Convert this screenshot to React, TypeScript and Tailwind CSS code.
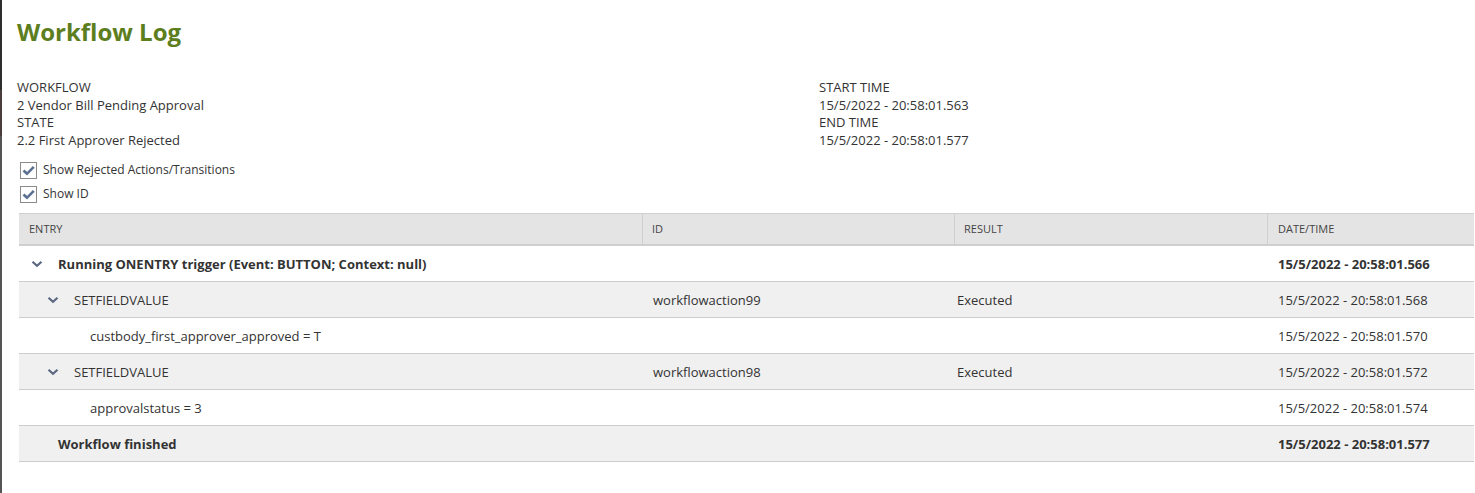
import React from "react";

const Chevron = () => (
  <svg width="12" height="8" viewBox="0 0 12 8" className="shrink-0">
    <path d="M1.5 1.8 L6 5.8 L10.5 1.8" fill="none" stroke="#5b6780" strokeWidth="2.2" />
  </svg>
);

const Check = () => (
  <span className="flex h-[17px] w-[17px] items-center justify-center border border-[#8a8a8a] bg-white">
    <svg width="13" height="11" viewBox="0 0 13 11">
      <path d="M1.5 5.5 L5 8.8 L11.8 1.8" fill="none" stroke="#5a7091" strokeWidth="2.6" />
    </svg>
  </span>
);

type Row = {
  level: number;
  chevron: boolean;
  entry: string;
  id?: string;
  result?: string;
  date: string;
  bold?: boolean;
  gray?: boolean;
};

const rows: Row[] = [
  { level: 0, chevron: true, entry: "Running ONENTRY trigger (Event: BUTTON; Context: null)", date: "15/5/2022 - 20:58:01.566", bold: true },
  { level: 1, chevron: true, entry: "SETFIELDVALUE", id: "workflowaction99", result: "Executed", date: "15/5/2022 - 20:58:01.568", gray: true },
  { level: 2, chevron: false, entry: "custbody_first_approver_approved = T", date: "15/5/2022 - 20:58:01.570" },
  { level: 1, chevron: true, entry: "SETFIELDVALUE", id: "workflowaction98", result: "Executed", date: "15/5/2022 - 20:58:01.572", gray: true },
  { level: 2, chevron: false, entry: "approvalstatus = 3", date: "15/5/2022 - 20:58:01.574" },
  { level: 0, chevron: false, entry: "Workflow finished", date: "15/5/2022 - 20:58:01.577", bold: true, gray: true },
];

const padFor = (level: number, chevron: boolean) => {
  if (level === 0) return chevron ? "pl-[12px]" : "pl-[39px]";
  if (level === 1) return "pl-[28px]";
  return "pl-[71px]";
};

export default function App() {
  return (
    <div
      className="flex h-[493px] w-[1475px] bg-white text-[#333333]"
      style={{ fontFamily: '"Open Sans", "Liberation Sans", sans-serif' }}
    >
      <div className="flex w-[2px] shrink-0 flex-col">
        <div className="h-[90px] bg-[#2e2e2e]" />
        <div className="h-[46px] bg-[#4a3c3a]" />
        <div className="flex-1 bg-[#555555]" />
      </div>
      <div className="flex min-w-0 flex-1 flex-col">
        <h1 className="ml-[15px] mt-[15px] text-[24px] font-bold leading-[34px] text-[#5d7e1e]">
          Workflow Log
        </h1>
        <div className="ml-[15px] mt-[30px] flex text-[13px] leading-[17.6px]">
          <div className="w-[802px]">
            <div>WORKFLOW</div>
            <div>2 Vendor Bill Pending Approval</div>
            <div>STATE</div>
            <div>2.2 First Approver Rejected</div>
          </div>
          <div>
            <div>START TIME</div>
            <div>15/5/2022 - 20:58:01.563</div>
            <div>END TIME</div>
            <div>15/5/2022 - 20:58:01.577</div>
          </div>
        </div>
        <div className="ml-[18px] mt-[9px] flex flex-col text-[12px]">
          <label className="flex h-[24px] items-center gap-[6px]">
            <Check />
            <span>Show Rejected Actions/Transitions</span>
          </label>
          <label className="flex h-[24px] items-center gap-[6px]">
            <Check />
            <span>Show ID</span>
          </label>
        </div>
        <div className="ml-[17px] mr-[1px] mt-[7px] text-[13px]">
          <div className="grid h-[33px] grid-cols-[624px_312px_313px_1fr] border-t border-b-2 border-[#cfcfcf] bg-[#e4e4e4] text-[11px] text-[#444]">
            <div className="flex items-center border-r border-[#d0d0d0] pl-[10px]">ENTRY</div>
            <div className="flex items-center border-r border-[#d0d0d0] pl-[9px]">ID</div>
            <div className="flex items-center border-r border-[#d0d0d0] pl-[9px]">RESULT</div>
            <div className="flex items-center pl-[10px]">DATE/TIME</div>
          </div>
          {rows.map((r, i) => (
            <div
              key={i}
              className={`grid h-[36px] grid-cols-[624px_312px_313px_1fr] border-b border-[#cccccc] pt-[1px] ${r.gray ? "bg-[#f0f0f0]" : "bg-white"} ${r.bold ? "font-bold" : ""}`}
            >
              <div className={`flex items-center gap-[15px] ${padFor(r.level, r.chevron)}`}>
                {r.chevron && <Chevron />}
                <span>{r.entry}</span>
              </div>
              <div className="flex items-center pl-[10px]">{r.id ?? ""}</div>
              <div className="flex items-center pl-[2px]">{r.result ?? ""}</div>
              <div className="flex items-center pl-[10px]">{r.date}</div>
            </div>
          ))}
        </div>
      </div>
    </div>
  );
}
